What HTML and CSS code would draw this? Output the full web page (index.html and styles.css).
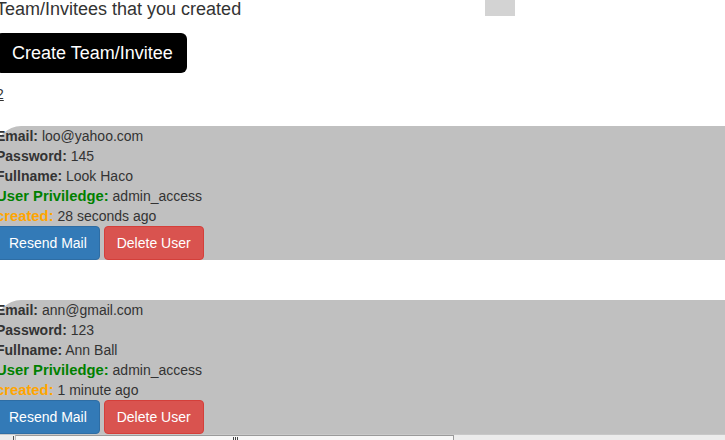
FILE: index.html
```html
<!DOCTYPE html>
<html>
<head>
<meta charset="utf-8">
<title>Team/Invitees</title>
<link rel="stylesheet" href="styles.css">
</head>
<body>
<div class="page">
  <div class="header">
    <div class="title">Team/Invitees that you created</div>
    <div class="header-box"></div>
  </div>
  <button class="create-btn">Create Team/Invitee</button>
  <div class="count"><a href="#">2</a></div>

  <div class="card">
    <div class="row"><b class="label">Email:</b> loo@yahoo.com</div>
    <div class="row"><b class="label">Password:</b> 145</div>
    <div class="row"><b class="label">Fullname:</b> Look Haco</div>
    <div class="row"><b class="label priv">User Priviledge:</b> admin_access</div>
    <div class="row"><b class="label created">created:</b> 28 seconds ago</div>
    <div class="actions"><button class="btn btn-blue">Resend Mail</button> <button class="btn btn-red">Delete User</button></div>
  </div>

  <div class="card">
    <div class="row"><b class="label">Email:</b> ann@gmail.com</div>
    <div class="row"><b class="label">Password:</b> 123</div>
    <div class="row"><b class="label">Fullname:</b> Ann Ball</div>
    <div class="row"><b class="label priv">User Priviledge:</b> admin_access</div>
    <div class="row"><b class="label created">created:</b> 1 minute ago</div>
    <div class="actions"><button class="btn btn-blue">Resend Mail</button> <button class="btn btn-red">Delete User</button></div>
  </div>
</div>
<div class="bottom">
  <div class="tick"></div>
  <div class="bottom-box"><span class="grip"></span></div>
</div>
</body>
</html>
```

FILE: styles.css
```css
html, body {
  margin: 0;
  padding: 0;
  overflow: hidden;
  background: #ffffff;
}
body {
  font-family: "Liberation Sans", Arial, sans-serif;
  font-size: 14px;
  line-height: 20px;
  color: #333333;
}
.page {
  margin-left: -4px;
}
.header {
  display: grid;
  grid-template-columns: 489px 30px;
  align-items: start;
}
.title {
  font-size: 18px;
  line-height: 18px;
  color: #333333;
}
.header-box {
  height: 16px;
  background: #d3d3d3;
}
.create-btn {
  display: block;
  margin-top: 15px;
  background: #000000;
  color: #ffffff;
  border: none;
  border-radius: 6px;
  font-family: "Liberation Sans", Arial, sans-serif;
  font-size: 18px;
  line-height: 24px;
  padding: 8px 14px 8px 16px;
}
.count {
  margin-top: 11px;
  height: 20px;
}
.count a {
  color: #333333;
  text-decoration: underline;
}
.card {
  margin-top: 22px;
  margin-right: -40px;
  background: #c0c0c0;
  border-radius: 25px;
}
.card + .card {
  margin-top: 40px;
}
.row {
  height: 20px;
}
.label {
  font-weight: bold;
  color: #333333;
}
.label.priv {
  color: #008000;
  font-size: 14.8px;
}
.label.created {
  color: #ffa500;
  font-size: 14.8px;
}
.actions {
  font-size: 14px;
  line-height: 0;
}
.btn {
  font-family: "Liberation Sans", Arial, sans-serif;
  font-size: 14px;
  line-height: 20px;
  padding: 6px 12px;
  border: 1px solid transparent;
  border-radius: 4px;
  color: #ffffff;
  vertical-align: top;
}
.btn-blue {
  background: #337ab7;
  border-color: #2e6da4;
}
.btn-red {
  background: #d9534f;
  border-color: #d43f3a;
}
.bottom {
  display: flex;
  height: 6px;
  background: #ececec;
  border-top: 1px solid #c8c8c8;
}
.tick {
  width: 1px;
  height: 4px;
  margin: 1px 0 0 13px;
  background: #555555;
}
.bottom-box {
  position: relative;
  margin-left: 1px;
  width: 437px;
  background: #f7f7f7;
  border-top: 1px solid #9a9a9a;
  border-right: 1px solid #9a9a9a;
  border-left: 1px solid #bdbdbd;
}
.grip {
  position: absolute;
  left: 217px;
  top: 1px;
  width: 6px;
  height: 3px;
  background: repeating-linear-gradient(90deg, #444 0 1px, transparent 1px 2px);
}
```
